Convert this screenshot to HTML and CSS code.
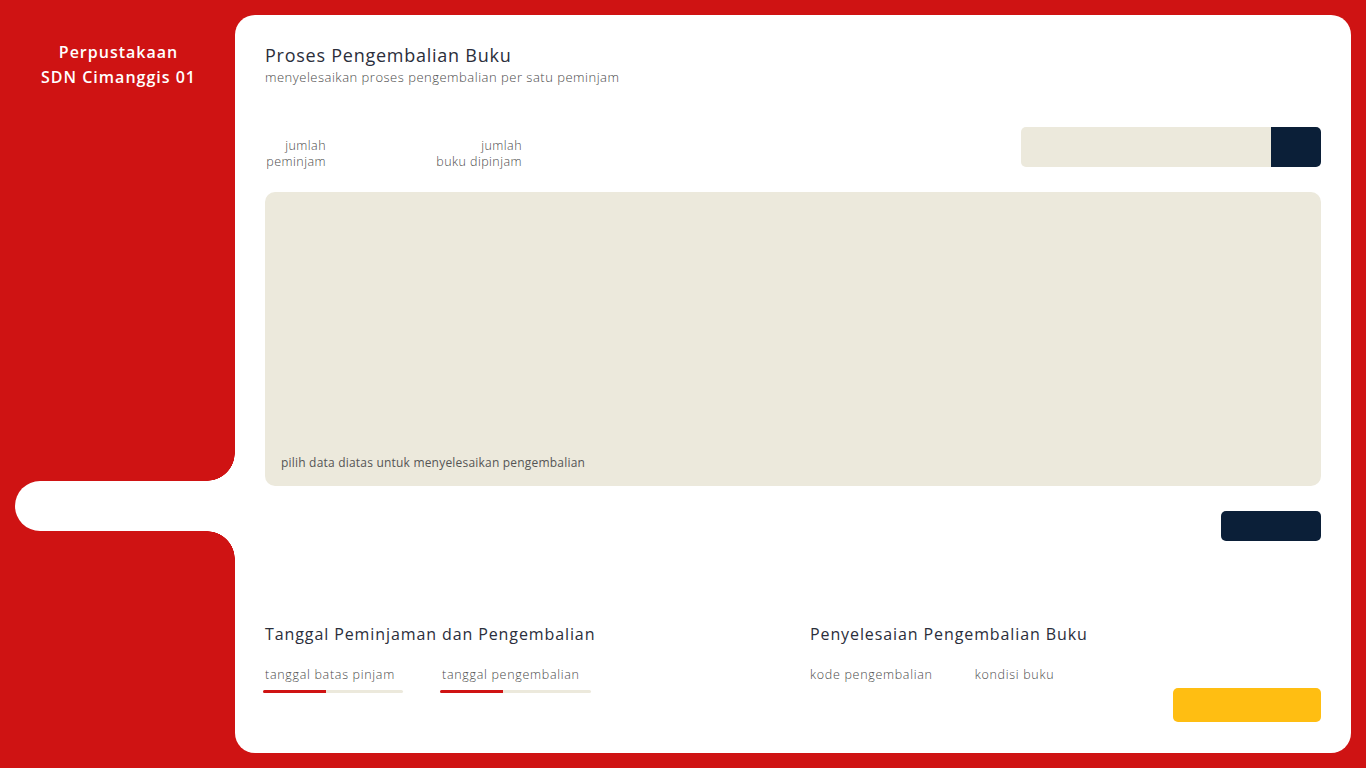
FILE: index.html
```html
<!DOCTYPE html>
<html lang="id">
<head>
<meta charset="utf-8">
<title>Proses Pengembalian Buku</title>
<link rel="stylesheet" href="styles.css">
</head>
<body>
<div class="app">
  <aside class="sidebar">
    <div class="brand">Perpustakaan<br>SDN Cimanggis 01</div>
    <nav class="nav">
      <div class="nav-item active"></div>
    </nav>
  </aside>
  <main class="panel">
    <header class="head">
      <h1 class="title">Proses Pengembalian Buku</h1>
      <p class="subtitle">menyelesaikan proses pengembalian per satu peminjam</p>
    </header>
    <div class="toolbar">
      <div class="stats">
        <div class="stat stat-a">jumlah<br>peminjam</div>
        <div class="stat stat-b">jumlah<br>buku dipinjam</div>
      </div>
      <div class="search">
        <div class="search-input"></div>
        <div class="search-btn"></div>
      </div>
    </div>
    <section class="data-box">
      <p class="hint">pilih data diatas untuk menyelesaikan pengembalian</p>
    </section>
    <div class="action-row">
      <div class="btn-navy"></div>
    </div>
    <section class="bottom">
      <div class="col">
        <h2 class="col-title">Tanggal Peminjaman dan Pengembalian</h2>
        <div class="fields">
          <div class="field f1">
            <span class="label">tanggal batas pinjam</span>
            <div class="bar"><div class="bar-fill"></div></div>
          </div>
          <div class="field f2">
            <span class="label">tanggal pengembalian</span>
            <div class="bar"><div class="bar-fill"></div></div>
          </div>
        </div>
      </div>
      <div class="col">
        <h2 class="col-title">Penyelesaian Pengembalian Buku</h2>
        <div class="fields2">
          <span class="label">kode pengembalian</span>
          <span class="label">kondisi buku</span>
        </div>
        <div class="submit-row">
          <div class="btn-yellow"></div>
        </div>
      </div>
    </section>
  </main>
</div>
</body>
</html>
```
FILE: styles.css
```css
* { box-sizing: border-box; }
html, body { margin: 0; padding: 0; }
body {
  background: #cf1313;
  font-family: "Open Sans", "Noto Sans", sans-serif;
  color: #2b2e3b;
}
.app {
  display: flex;
  height: 768px;
}
.sidebar {
  width: 235px;
  flex: 0 0 235px;
  display: flex;
  flex-direction: column;
}
.brand {
  padding-top: 40px;
  padding-left: 2px;
  text-align: center;
  color: #fff;
  font-weight: 600;
  font-size: 16px;
  line-height: 25px;
  letter-spacing: 1px;
}
.nav {
  margin-top: 391px;
  padding-left: 15px;
}
.nav-item {
  position: relative;
  height: 50px;
  background: #fff;
  border-radius: 25px 0 0 25px;
}
.nav-item::before,
.nav-item::after {
  content: "";
  position: absolute;
  right: 0;
  width: 28px;
  height: 28px;
}
.nav-item::before {
  top: -28px;
  background: radial-gradient(circle at 0 0, transparent 27.5px, #fff 28px);
}
.nav-item::after {
  bottom: -28px;
  background: radial-gradient(circle at 0 100%, transparent 27.5px, #fff 28px);
}
.panel {
  flex: 1;
  margin: 15px 15px 15px 0;
  background: #fff;
  border-radius: 20px;
  padding: 28px 30px 31px 30px;
  display: flex;
  flex-direction: column;
}
.title {
  margin: 0;
  font-size: 18px;
  line-height: 24px;
  font-weight: 500;
  letter-spacing: 0.75px;
  color: #2b2e3b;
}
.subtitle {
  margin: 0;
  font-size: 13px;
  line-height: 20px;
  font-weight: 300;
  letter-spacing: 0.5px;
  color: #4a4a4a;
}
.toolbar {
  margin-top: 40px;
  height: 40px;
  display: flex;
  justify-content: space-between;
  align-items: flex-start;
}
.stats {
  display: flex;
  padding-top: 11px;
}
.stat {
  text-align: right;
  font-size: 12.5px;
  line-height: 16px;
  font-weight: 300;
  letter-spacing: 0.45px;
  color: #4a4a4a;
}
.stat-a { width: 61px; }
.stat-b { width: 196px; }
.search {
  display: flex;
  width: 300px;
  height: 40px;
  border-radius: 5px;
  overflow: hidden;
}
.search-input {
  flex: 1;
  background: #ece9dc;
}
.search-btn {
  width: 50px;
  background: #0b1f38;
}
.data-box {
  margin-top: 25px;
  height: 294px;
  background: #ece9dc;
  border-radius: 10px;
  padding: 0 16px 14px;
  display: flex;
  flex-direction: column;
  justify-content: flex-end;
}
.hint {
  margin: 0;
  font-size: 12px;
  line-height: 18px;
  font-weight: 400;
  letter-spacing: 0.2px;
  color: #555;
}
.action-row {
  margin-top: 25px;
  display: flex;
  justify-content: flex-end;
}
.btn-navy {
  width: 100px;
  height: 30px;
  background: #0b1f38;
  border-radius: 5px;
}
.bottom {
  margin-top: auto;
  display: grid;
  grid-template-columns: 1fr 1fr;
  column-gap: 34px;
}
.col-title {
  margin: 0;
  font-size: 16px;
  line-height: 24px;
  font-weight: 500;
  letter-spacing: 0.9px;
  color: #2b2e3b;
}
.fields {
  margin-top: 19px;
  display: flex;
  gap: 37px;
  margin-left: -2px;
}
.field {
  display: flex;
  flex-direction: column;
}
.f1 { width: 140px; }
.f2 { width: 151px; }
.label {
  font-size: 12.5px;
  line-height: 20px;
  font-weight: 300;
  letter-spacing: 0.7px;
  color: #4a4a4a;
}
.field .label { padding-left: 2px; }
.bar {
  margin-top: 5px;
  height: 3px;
  border-radius: 2px;
  background: #ece9dc;
  overflow: hidden;
}
.bar-fill {
  width: 63px;
  height: 100%;
  background: #cf1313;
}
.fields2 {
  margin-top: 19px;
  display: flex;
  gap: 42px;
}
.submit-row {
  margin-top: 3px;
  display: flex;
  justify-content: flex-end;
}
.btn-yellow {
  width: 148px;
  height: 34px;
  background: #ffbe12;
  border-radius: 5px;
}
```
